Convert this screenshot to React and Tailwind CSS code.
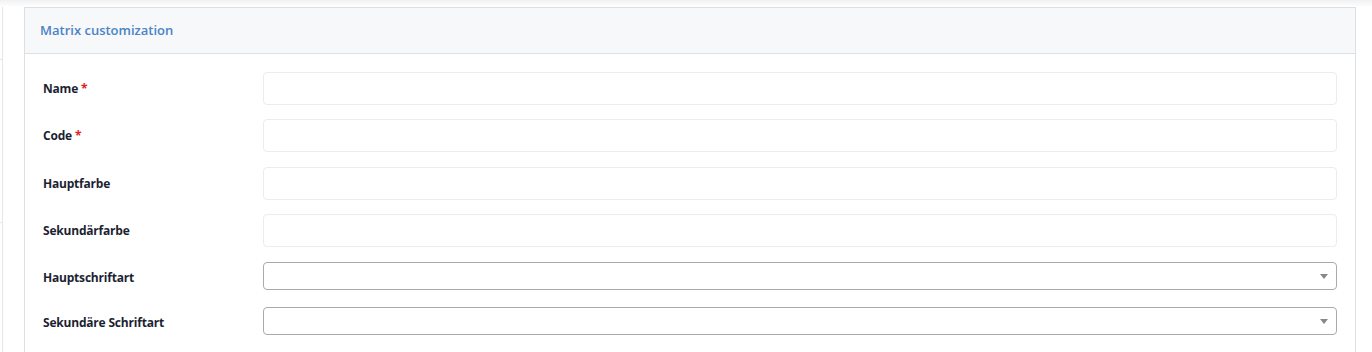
const fields = [
  { label: "Name", required: true, type: "input", mb: "mb-[14px]" },
  { label: "Code", required: true, type: "input", mb: "mb-[15px]" },
  { label: "Hauptfarbe", type: "input", mb: "mb-[14px]" },
  { label: "Sekundärfarbe", type: "input", mb: "mb-[15px]" },
  { label: "Hauptschriftart", type: "select", mb: "mb-[17px]" },
  { label: "Sekundäre Schriftart", type: "select", mb: "mb-[17px]" },
  { label: "", type: "input", mb: "" },
];

function Caret() {
  return (
    <svg width="8" height="5" viewBox="0 0 8 5" className="shrink-0">
      <path d="M0 0h8L4 5z" fill="#888" />
    </svg>
  );
}

function Field({ f }) {
  if (f.type === "select") {
    return (
      <div className="flex-1 h-[28px] border border-[#aaaaaa] rounded-[4px] bg-white flex items-center justify-end pr-[8px]">
        <Caret />
      </div>
    );
  }
  return (
    <div className="flex-1 h-[33px] border border-[#ececec] rounded-[4px] bg-white" />
  );
}

export default function App() {
  return (
    <div
      className="w-[1372px] h-[352px] overflow-hidden bg-white relative"
      style={{ fontFamily: '"Open Sans", "Noto Sans", sans-serif' }}
    >
      <div className="h-[7px] bg-gradient-to-b from-[#f1f1f1] to-white" />
      <div className="flex">
        {/* sidebar edge */}
        <div className="w-[3px] shrink-0 border-r border-[#e4e6ea] h-[345px] flex flex-col">
          <div className="h-[53px] border-b border-[#e4e6ea]" />
          <div className="h-[163px] border-b border-[#e4e6ea]" />
        </div>
        <div className="w-[21px] shrink-0" />

        {/* card */}
        <div className="w-[1332px] border border-[#dcdfe4] border-b-0 bg-white">
          <div className="h-[46px] bg-[#f7f8fa] border-b border-[#dcdfe4] flex items-center pl-[15px]">
            <h3 className="text-[13px] font-semibold text-[#4a83c6] leading-none">
              Matrix customization
            </h3>
          </div>
          <div className="pt-[18px] pl-[18px] pr-[18px]">
            {fields.map((f, i) => (
              <div key={i} className={`flex items-center ${f.mb}`}>
                <label
                  className={
                    f.type === "select"
                      ? "w-[220px] shrink-0 pt-[3px] text-[12px] font-bold text-[#1c1f33] leading-none tracking-[-0.2px]"
                      : "w-[220px] shrink-0 text-[12px] font-bold text-[#1c1f33] leading-none tracking-[-0.2px]"
                  }
                >
                  {f.label}
                  {f.required && <span className="text-[#e0201b]"> *</span>}
                </label>
                <Field f={f} />
              </div>
            ))}
          </div>
        </div>
      </div>
    </div>
  );
}
